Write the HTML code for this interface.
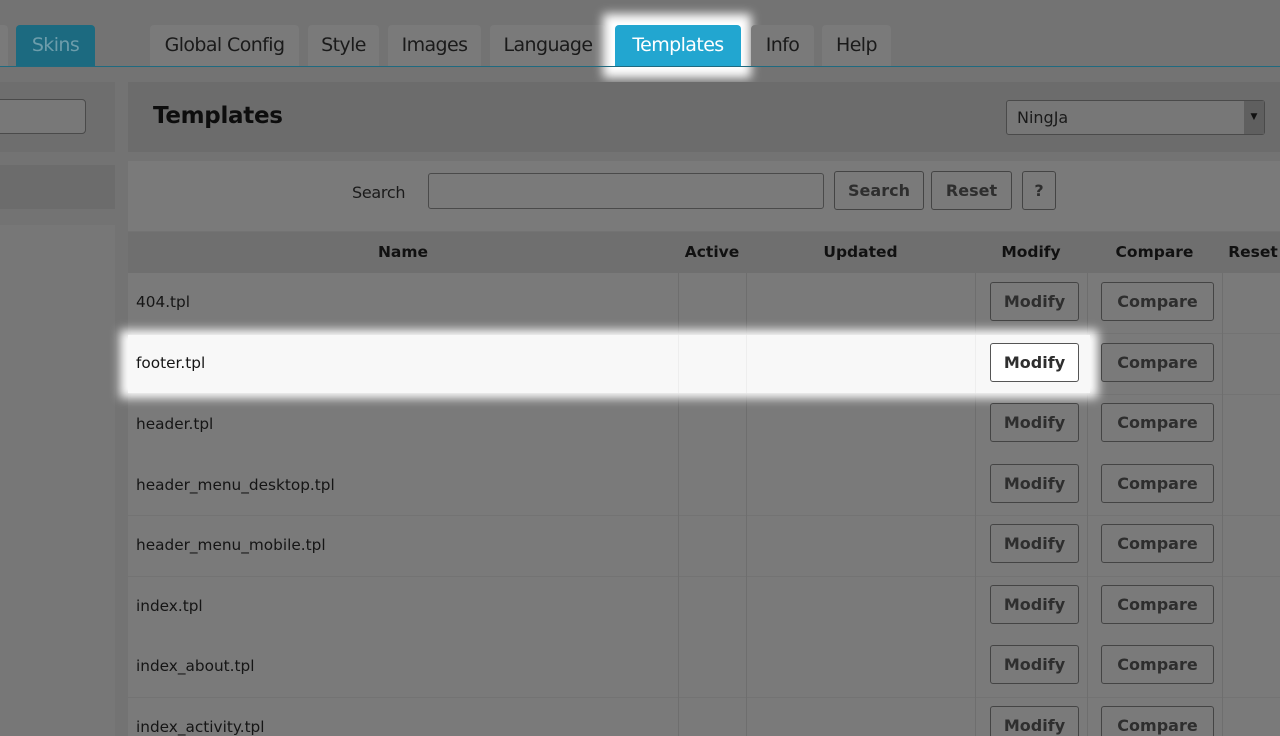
<!DOCTYPE html><html><head><style>
html,body{margin:0;width:1280px;height:736px;overflow:hidden}
body{background:#737373;font-family:"DejaVu Sans","Liberation Sans",sans-serif;position:relative;color:#111}
.a{position:absolute;box-sizing:border-box}
.tab{position:absolute;top:25px;height:41px;background:#7a7a7a;border-radius:4px 4px 0 0;font-size:19px;color:#1a1a1a;line-height:41px;text-align:center;letter-spacing:-0.6px}
.btn{position:absolute;border:1px solid #444;border-radius:3px;background:#7a7a7a;font-weight:bold;font-size:16px;color:#2e2e2e;text-align:center;box-sizing:border-box}
.row{position:absolute;left:128px;width:1152px;height:60px;background:#7a7a7a}
.nm{position:absolute;left:136px;font-size:15.3px;color:#151515}
.vl{position:absolute;width:1px;background:#6e6e6e}
.th{position:absolute;top:243px;font-weight:bold;font-size:15.5px;color:#111;text-align:center}
</style></head><body>
<div class="tab" style="left:-10px;width:18px"></div>
<div class="tab" style="left:16px;width:79px;background:#1c6a80;color:#6d9dab">Skins</div>
<div class="tab" style="left:150px;width:149px">Global Config</div>
<div class="tab" style="left:308px;width:71px">Style</div>
<div class="tab" style="left:388px;width:93px">Images</div>
<div class="tab" style="left:490px;width:116px">Language</div>
<div class="a" style="left:603px;top:14px;width:148px;height:64px;background:#fff;filter:blur(5px)"></div>
<div class="tab" style="left:615px;width:126px;background:#22a6d0;color:#fff">Templates</div>
<div class="tab" style="left:751px;width:63px">Info</div>
<div class="tab" style="left:822px;width:69px">Help</div>
<div class="a" style="left:0;top:66px;width:1280px;height:1px;background:#1f6a80"></div>
<div class="a" style="left:0;top:82px;width:115px;height:70px;background:#6e6e6e"></div>
<div class="a" style="left:-5px;top:99px;width:91px;height:35px;border:1px solid #4a4a4a;border-radius:4px;background:#787878"></div>
<div class="a" style="left:0;top:165px;width:115px;height:44px;background:#6c6c6c"></div>
<div class="a" style="left:0;top:225px;width:115px;height:520px;background:#777"></div>
<div class="a" style="left:128px;top:82px;width:1152px;height:70px;background:#6c6c6c"></div>
<div class="a" style="left:153px;top:103px;font-size:23px;font-weight:bold;color:#0d0d0d;letter-spacing:-0.3px">Templates</div>
<div class="a" style="left:1006px;top:100px;width:259px;height:35px;border:1px solid #4a4a4a;border-radius:3px;background:#777;font-size:16px;line-height:33px;padding-left:10px;color:#1a1a1a">NingJa<div class="a" style="right:0;top:0;width:20px;height:33px;background:#5f5f5f;font-size:9px;text-align:center;color:#111">▼</div></div>
<div class="a" style="left:128px;top:161px;width:1152px;height:70px;background:#7a7a7a"></div>
<div class="a" style="left:352px;top:183px;font-size:16px;color:#1a1a1a;letter-spacing:-0.3px">Search</div>
<div class="a" style="left:428px;top:173px;width:396px;height:36px;border:1px solid #4a4a4a;border-radius:3px;background:#7a7a7a"></div>
<div class="btn" style="left:834px;top:171px;width:90px;height:39px;line-height:37px">Search</div>
<div class="btn" style="left:931px;top:171px;width:81px;height:39px;line-height:37px">Reset</div>
<div class="btn" style="left:1022px;top:171px;width:34px;height:39px;line-height:37px">?</div>
<div class="a" style="left:128px;top:232px;width:1152px;height:41px;background:#6f6f6f"></div>
<div class="th" style="left:128px;width:550px">Name</div>
<div class="th" style="left:678px;width:68px">Active</div>
<div class="th" style="left:746px;width:229px">Updated</div>
<div class="th" style="left:975px;width:112px">Modify</div>
<div class="th" style="left:1087px;width:135px">Compare</div>
<div class="th" style="left:1222px;width:62px">Reset</div>
<div class="row" style="top:273px"></div><div class="row" style="top:334px"></div><div class="row" style="top:395px"></div><div class="row" style="top:455px"></div><div class="row" style="top:516px"></div><div class="row" style="top:577px"></div><div class="row" style="top:637px"></div><div class="row" style="top:698px"></div>
<div class="vl" style="left:678px;top:273px;height:470px"></div><div class="vl" style="left:746px;top:273px;height:470px"></div><div class="vl" style="left:975px;top:273px;height:470px"></div><div class="vl" style="left:1087px;top:273px;height:470px"></div><div class="vl" style="left:1222px;top:273px;height:470px"></div>
<div class="a" style="left:120px;top:330px;width:978px;height:68px;background:#fff;filter:blur(5px)"></div>
<div class="a" style="left:128px;top:335px;width:962px;height:58px;background:#f8f8f8"></div>
<div class="vl" style="left:678px;top:335px;height:58px;background:#eee"></div><div class="vl" style="left:746px;top:335px;height:58px;background:#eee"></div><div class="vl" style="left:975px;top:335px;height:58px;background:#eee"></div>
<div class="nm" style="top:293px">404.tpl</div>
<div class="nm" style="top:354px">footer.tpl</div>
<div class="nm" style="top:415px">header.tpl</div>
<div class="nm" style="top:476px">header_menu_desktop.tpl</div>
<div class="nm" style="top:536px">header_menu_mobile.tpl</div>
<div class="nm" style="top:597px">index.tpl</div>
<div class="nm" style="top:657px">index_about.tpl</div>
<div class="nm" style="top:718px">index_activity.tpl</div>
<div class="btn" style="left:990px;top:282px;width:89px;height:39px;line-height:37px">Modify</div>
<div class="btn" style="left:990px;top:343px;width:89px;height:39px;line-height:37px;background:#fff;border-color:#555">Modify</div>
<div class="btn" style="left:990px;top:403px;width:89px;height:39px;line-height:37px">Modify</div>
<div class="btn" style="left:990px;top:464px;width:89px;height:39px;line-height:37px">Modify</div>
<div class="btn" style="left:990px;top:524px;width:89px;height:39px;line-height:37px">Modify</div>
<div class="btn" style="left:990px;top:585px;width:89px;height:39px;line-height:37px">Modify</div>
<div class="btn" style="left:990px;top:645px;width:89px;height:39px;line-height:37px">Modify</div>
<div class="btn" style="left:990px;top:706px;width:89px;height:39px;line-height:37px">Modify</div>
<div class="btn" style="left:1101px;top:282px;width:113px;height:39px;line-height:37px">Compare</div>
<div class="btn" style="left:1101px;top:343px;width:113px;height:39px;line-height:37px">Compare</div>
<div class="btn" style="left:1101px;top:403px;width:113px;height:39px;line-height:37px">Compare</div>
<div class="btn" style="left:1101px;top:464px;width:113px;height:39px;line-height:37px">Compare</div>
<div class="btn" style="left:1101px;top:524px;width:113px;height:39px;line-height:37px">Compare</div>
<div class="btn" style="left:1101px;top:585px;width:113px;height:39px;line-height:37px">Compare</div>
<div class="btn" style="left:1101px;top:645px;width:113px;height:39px;line-height:37px">Compare</div>
<div class="btn" style="left:1101px;top:706px;width:113px;height:39px;line-height:37px">Compare</div>
</body></html>
